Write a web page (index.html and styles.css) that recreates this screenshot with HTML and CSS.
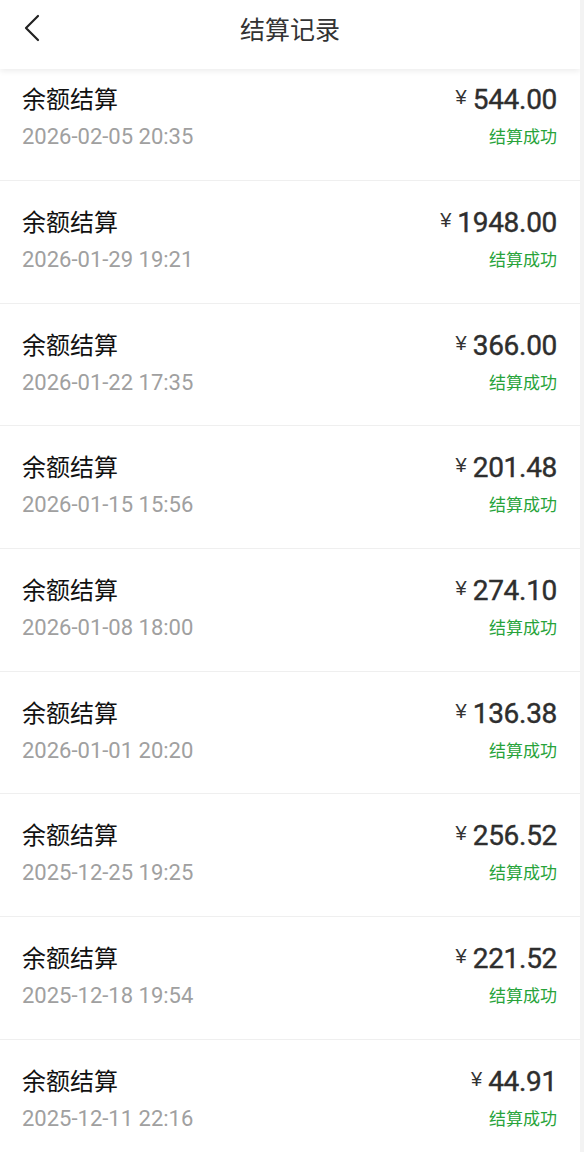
FILE: index.html
```html
<!DOCTYPE html>
<html lang="zh-CN">
<head>
<meta charset="utf-8">
<title>结算记录</title>
<link rel="stylesheet" href="styles.css">
</head>
<body>
<div class="page">
  <header class="topbar">
    <svg class="back" width="20" height="30" viewBox="0 0 20 30"><polyline points="15,2 3,14 15,26" fill="none" stroke="#222" stroke-width="2.2" stroke-linecap="round" stroke-linejoin="round"/></svg>
    <h1 class="title">结算记录</h1>
  </header>
  <ul class="list">
    <li class="row"><div class="left"><div class="name">余额结算</div><div class="date">2026-02-05 20:35</div></div><div class="right"><div class="amount"><span class="yen">¥</span>544.00</div><div class="status">结算成功</div></div></li>
    <li class="row"><div class="left"><div class="name">余额结算</div><div class="date">2026-01-29 19:21</div></div><div class="right"><div class="amount"><span class="yen">¥</span>1948.00</div><div class="status">结算成功</div></div></li>
    <li class="row"><div class="left"><div class="name">余额结算</div><div class="date">2026-01-22 17:35</div></div><div class="right"><div class="amount"><span class="yen">¥</span>366.00</div><div class="status">结算成功</div></div></li>
    <li class="row"><div class="left"><div class="name">余额结算</div><div class="date">2026-01-15 15:56</div></div><div class="right"><div class="amount"><span class="yen">¥</span>201.48</div><div class="status">结算成功</div></div></li>
    <li class="row"><div class="left"><div class="name">余额结算</div><div class="date">2026-01-08 18:00</div></div><div class="right"><div class="amount"><span class="yen">¥</span>274.10</div><div class="status">结算成功</div></div></li>
    <li class="row"><div class="left"><div class="name">余额结算</div><div class="date">2026-01-01 20:20</div></div><div class="right"><div class="amount"><span class="yen">¥</span>136.38</div><div class="status">结算成功</div></div></li>
    <li class="row"><div class="left"><div class="name">余额结算</div><div class="date">2025-12-25 19:25</div></div><div class="right"><div class="amount"><span class="yen">¥</span>256.52</div><div class="status">结算成功</div></div></li>
    <li class="row"><div class="left"><div class="name">余额结算</div><div class="date">2025-12-18 19:54</div></div><div class="right"><div class="amount"><span class="yen">¥</span>221.52</div><div class="status">结算成功</div></div></li>
    <li class="row"><div class="left"><div class="name">余额结算</div><div class="date">2025-12-11 22:16</div></div><div class="right"><div class="amount"><span class="yen">¥</span>44.91</div><div class="status">结算成功</div></div></li>
  </ul>
</div>
</body>
</html>
```

FILE: styles.css
```css
html, body {
  margin: 0;
  padding: 0;
  background: #f3f3f3;
  height: 1152px;
  overflow: hidden;
}
body {
  font-family: Roboto, "Noto Sans CJK SC", sans-serif;
}
.page {
  position: relative;
  width: 580px;
  height: 1152px;
  background: #fff;
  overflow: hidden;
}
.topbar {
  position: absolute;
  top: 0;
  left: 0;
  right: 0;
  height: 69px;
  box-sizing: border-box;
  padding-top: 14px;
  background: #fff;
  box-shadow: 0 2px 6px rgba(0, 0, 0, 0.08);
  z-index: 2;
  display: flex;
  align-items: flex-start;
  justify-content: center;
}
.back {
  position: absolute;
  left: 23px;
  top: 14px;
}
.title {
  margin: 0;
  font-family: "Noto Sans CJK SC", sans-serif;
  font-size: 25px;
  font-weight: 400;
  color: #333;
  line-height: 28px;
}
.list {
  list-style: none;
  margin: 0;
  padding: 58.3px 0 0;
}
.row {
  box-sizing: border-box;
  height: 122.67px;
  border-bottom: 1px solid #efefef;
  display: flex;
  justify-content: space-between;
  padding: 24px 23px 0 22px;
}
.left, .right {
  display: flex;
  flex-direction: column;
}
.right {
  align-items: flex-end;
}
.name {
  font-family: "Noto Sans CJK SC", sans-serif;
  font-size: 24px;
  line-height: 32px;
  color: #111;
}
.date {
  font-family: Roboto, sans-serif;
  font-size: 22px;
  line-height: 28px;
  margin-top: 9px;
  color: #a0a0a0;
}
.amount {
  font-family: Roboto, sans-serif;
  font-size: 28px;
  font-weight: 400;
  letter-spacing: -0.3px;
  line-height: 36px;
  color: #2e2e2e;
  display: flex;
  align-items: flex-start;
  -webkit-text-stroke: 0.4px #2e2e2e;
}
.yen {
  font-family: "Liberation Sans", sans-serif;
  font-size: 20px;
  font-weight: 400;
  line-height: 30px;
  letter-spacing: 0;
  margin-right: 6px;
  color: #333;
  -webkit-text-stroke: 0;
}
.status {
  font-family: "Noto Sans CJK SC", sans-serif;
  font-size: 17px;
  line-height: 24px;
  margin-top: 6px;
  color: #27a33a;
}
```
